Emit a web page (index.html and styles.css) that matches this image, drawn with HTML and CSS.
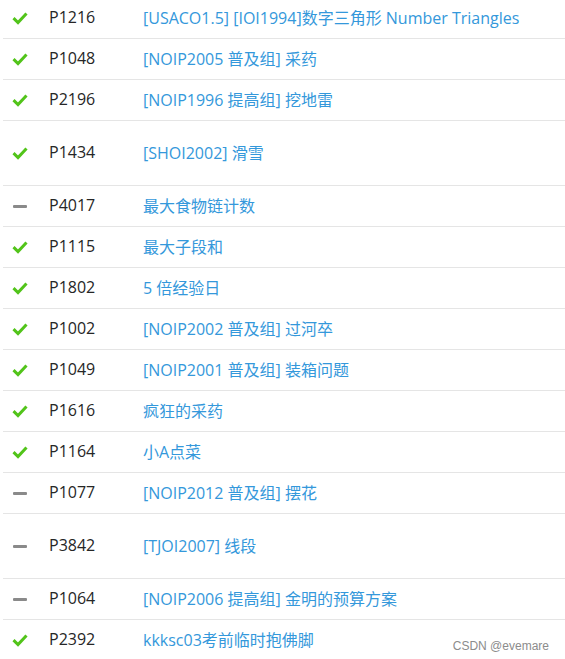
FILE: index.html
```html
<!DOCTYPE html>
<html lang="zh">
<head>
<meta charset="utf-8">
<link rel="stylesheet" href="styles.css">
</head>
<body>
<div class="list">
  <div class="row"><span class="icon ok"><svg viewBox="0 0 16 14" width="16" height="14"><path d="M1.5 7.2 L6 11.5 L14.5 2.5" fill="none" stroke="#52c41a" stroke-width="3"/></svg></span><span class="pid">P1216</span><a class="title">[USACO1.5] [IOI1994]数字三角形 Number Triangles</a></div>
  <div class="row"><span class="icon ok"><svg viewBox="0 0 16 14" width="16" height="14"><path d="M1.5 7.2 L6 11.5 L14.5 2.5" fill="none" stroke="#52c41a" stroke-width="3"/></svg></span><span class="pid">P1048</span><a class="title">[NOIP2005 普及组] 采药</a></div>
  <div class="row"><span class="icon ok"><svg viewBox="0 0 16 14" width="16" height="14"><path d="M1.5 7.2 L6 11.5 L14.5 2.5" fill="none" stroke="#52c41a" stroke-width="3"/></svg></span><span class="pid">P2196</span><a class="title">[NOIP1996 提高组] 挖地雷</a></div>
  <div class="row tall"><span class="icon ok"><svg viewBox="0 0 16 14" width="16" height="14"><path d="M1.5 7.2 L6 11.5 L14.5 2.5" fill="none" stroke="#52c41a" stroke-width="3"/></svg></span><span class="pid">P1434</span><a class="title">[SHOI2002] 滑雪</a></div>
  <div class="row"><span class="icon"><span class="dash"></span></span><span class="pid">P4017</span><a class="title">最大食物链计数</a></div>
  <div class="row"><span class="icon ok"><svg viewBox="0 0 16 14" width="16" height="14"><path d="M1.5 7.2 L6 11.5 L14.5 2.5" fill="none" stroke="#52c41a" stroke-width="3"/></svg></span><span class="pid">P1115</span><a class="title">最大子段和</a></div>
  <div class="row"><span class="icon ok"><svg viewBox="0 0 16 14" width="16" height="14"><path d="M1.5 7.2 L6 11.5 L14.5 2.5" fill="none" stroke="#52c41a" stroke-width="3"/></svg></span><span class="pid">P1802</span><a class="title">5 倍经验日</a></div>
  <div class="row"><span class="icon ok"><svg viewBox="0 0 16 14" width="16" height="14"><path d="M1.5 7.2 L6 11.5 L14.5 2.5" fill="none" stroke="#52c41a" stroke-width="3"/></svg></span><span class="pid">P1002</span><a class="title">[NOIP2002 普及组] 过河卒</a></div>
  <div class="row"><span class="icon ok"><svg viewBox="0 0 16 14" width="16" height="14"><path d="M1.5 7.2 L6 11.5 L14.5 2.5" fill="none" stroke="#52c41a" stroke-width="3"/></svg></span><span class="pid">P1049</span><a class="title">[NOIP2001 普及组] 装箱问题</a></div>
  <div class="row"><span class="icon ok"><svg viewBox="0 0 16 14" width="16" height="14"><path d="M1.5 7.2 L6 11.5 L14.5 2.5" fill="none" stroke="#52c41a" stroke-width="3"/></svg></span><span class="pid">P1616</span><a class="title">疯狂的采药</a></div>
  <div class="row"><span class="icon ok"><svg viewBox="0 0 16 14" width="16" height="14"><path d="M1.5 7.2 L6 11.5 L14.5 2.5" fill="none" stroke="#52c41a" stroke-width="3"/></svg></span><span class="pid">P1164</span><a class="title">小A点菜</a></div>
  <div class="row"><span class="icon"><span class="dash"></span></span><span class="pid">P1077</span><a class="title">[NOIP2012 普及组] 摆花</a></div>
  <div class="row tall"><span class="icon"><span class="dash"></span></span><span class="pid">P3842</span><a class="title">[TJOI2007] 线段</a></div>
  <div class="row"><span class="icon"><span class="dash"></span></span><span class="pid">P1064</span><a class="title">[NOIP2006 提高组] 金明的预算方案</a></div>
  <div class="row last"><span class="icon ok"><svg viewBox="0 0 16 14" width="16" height="14"><path d="M1.5 7.2 L6 11.5 L14.5 2.5" fill="none" stroke="#52c41a" stroke-width="3"/></svg></span><span class="pid">P2392</span><a class="title">kkksc03考前临时抱佛脚</a></div>
</div>
<div class="watermark">CSDN @evemare</div>
</body>
</html>
```
FILE: styles.css
```css
html, body {
  margin: 0;
  padding: 0;
  background: #fff;
  overflow: hidden;
}
body {
  font-family: "Open Sans", "Noto Sans CJK SC", sans-serif;
  font-size: 16px;
  width: 565px;
  height: 659px;
  position: relative;
}
.list {
  margin-top: -2px;
  margin-left: 3px;
}
.row {
  display: flex;
  align-items: center;
  height: 40px;
  border-bottom: 1px solid #e5e5e5;
  padding-left: 9px;
}
.row.tall {
  height: 64px;
}
.icon {
  width: 37px;
  flex: none;
  display: flex;
  align-items: center;
}
.icon svg {
  display: block;
}
.dash {
  display: block;
  width: 14px;
  height: 3px;
  margin-left: 1px;
  background: #8a8a8a;
  border-radius: 1px;
}
.pid {
  width: 94px;
  flex: none;
  color: #262626;
  margin-top: -2px;
}
.title {
  color: #3498db;
  white-space: nowrap;
  margin-top: -2px;
}
.watermark {
  position: absolute;
  right: 16px;
  bottom: 6px;
  font-family: "Liberation Sans", Arial, sans-serif;
  font-size: 12px;
  color: #8c8c8c;
}
```
